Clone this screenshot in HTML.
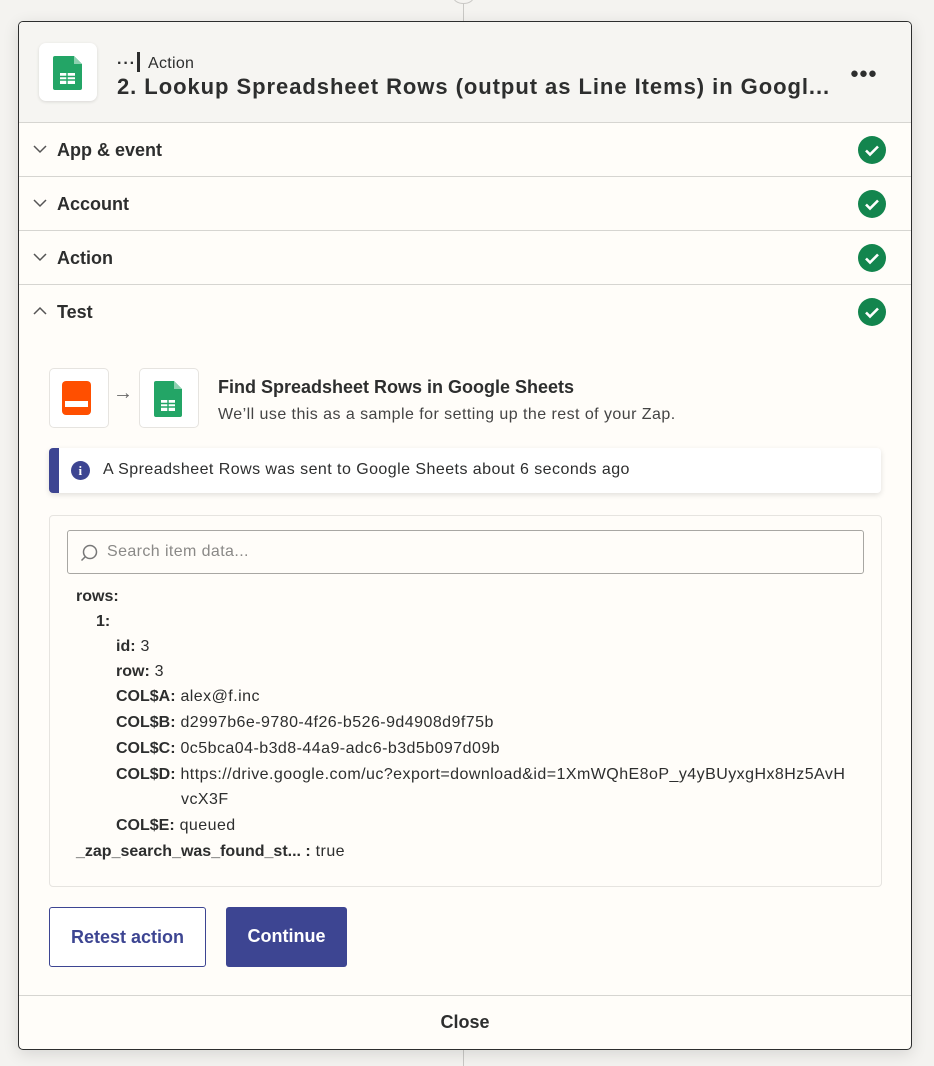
<!DOCTYPE html>
<html><head><meta charset="utf-8"><style>
*{box-sizing:border-box;margin:0;padding:0}
body{width:934px;height:1066px;background:#f4f3f0;font-family:"Liberation Sans",sans-serif;color:#2d2e2e;position:relative;overflow:hidden}
.vline{position:absolute;left:463px;width:1px;background:#c9c8c5}
.card{position:absolute;left:18px;top:21px;width:894px;height:1029px;background:#fffdf9;border:1px solid #2d2e2e;border-radius:5px;box-shadow:0 4px 16px rgba(0,0,0,.12);overflow:hidden}
.head{height:101px;background:#f6f5f2;border-bottom:1px solid #d6d5d1;position:relative}
.appicon{position:absolute;left:20px;top:21px;width:58px;height:58px;background:#fff;border-radius:7px;box-shadow:0 1px 3px rgba(0,0,0,.12)}
.lbl{position:absolute;left:98px;top:30px;font-size:16px;letter-spacing:.3px}
.title{position:absolute;left:98px;top:52px;font-size:22px;font-weight:bold;letter-spacing:0.95px;white-space:nowrap}
.dots{position:absolute;right:34px;top:43px;font-size:15px;font-weight:bold;letter-spacing:0px}
.row{height:54px;border-bottom:1px solid #d6d5d1;position:relative;font-size:18px;font-weight:bold}
.row span{position:absolute;left:38px;top:17px}
.row .chev{position:absolute;left:14px;top:19px}
.check{position:absolute;right:25px;top:13px;width:28px;height:28px;border-radius:50%;background:#13854e}
.test{border-bottom:none}
.ib{position:absolute;width:60px;height:60px;background:#fff;border:1px solid #e6e4e0;border-radius:5px}
.alert{position:absolute;left:30px;top:426px;width:832px;height:45px;background:#fff;border-left:10px solid #3d4592;border-radius:4px;box-shadow:0 2px 6px rgba(0,0,0,.12);font-size:16px;letter-spacing:.45px}
.box{position:absolute;left:30px;top:493px;width:833px;height:372px;border:1px solid #e6e4e0;border-radius:4px}
.search{position:absolute;left:17px;top:14px;width:797px;height:44px;border:1px solid #a8a7a3;border-radius:3px;font-size:16px;color:#8a8987;letter-spacing:.4px}
.d{position:absolute;font-size:16px;white-space:nowrap;letter-spacing:.45px}
.d b{font-weight:bold;letter-spacing:0}
.btn{position:absolute;top:885px;height:60px;font-size:18px;font-weight:bold;border-radius:3px;text-align:center;line-height:58px}
.foot{position:absolute;left:0;bottom:0;width:100%;height:54px;border-top:1px solid #d6d5d1;text-align:center;font-size:18px;font-weight:bold;line-height:52px}
</style></head><body>
<div class="vline" style="top:0;height:21px"></div>
<div style="position:absolute;left:453px;top:-10px;width:21px;height:14px;border:1px solid #c9c8c5;border-radius:50%;background:#f4f3f0"></div>
<div class="vline" style="top:1049px;height:17px"></div>
<div class="card">
 <div class="head">
  <div class="appicon"><svg width="58" height="58" viewBox="0 0 58 58"><path d="M16 13h19l8 8v24a2 2 0 0 1-2 2H16a2 2 0 0 1-2-2V15a2 2 0 0 1 2-2z" fill="#23a566"/><path d="M35 13v8h8z" fill="#8ed1b1"/><rect x="21" y="30" width="15" height="11" fill="#fff"/><path d="M21 33.5h15M21 37h15M28 30v11" stroke="#23a566" stroke-width="1.4"/></svg></div>
  <div class="lbl"><span style="font-weight:bold;letter-spacing:1px">···</span><span style="display:inline-block;width:3px;height:20px;background:#2d2e2e;vertical-align:-4px;margin:0 8px 0 1px"></span>Action</div>
  <div class="title">2. Lookup Spreadsheet Rows (output as Line Items) in Googl...</div>
  <div class="dots">●●●</div>
 </div>
 <div class="row"><svg class="chev" width="14" height="14"><path d="M1 4l6 6 6-6" stroke="#555" stroke-width="1.5" fill="none"/></svg><span>App &amp; event</span><div class="check"><svg width="28" height="28"><path d="M8 14.5l4 4 8-8" stroke="#fff" stroke-width="2.6" fill="none"/></svg></div></div>
 <div class="row"><svg class="chev" width="14" height="14"><path d="M1 4l6 6 6-6" stroke="#555" stroke-width="1.5" fill="none"/></svg><span>Account</span><div class="check"><svg width="28" height="28"><path d="M8 14.5l4 4 8-8" stroke="#fff" stroke-width="2.6" fill="none"/></svg></div></div>
 <div class="row"><svg class="chev" width="14" height="14"><path d="M1 4l6 6 6-6" stroke="#555" stroke-width="1.5" fill="none"/></svg><span>Action</span><div class="check"><svg width="28" height="28"><path d="M8 14.5l4 4 8-8" stroke="#fff" stroke-width="2.6" fill="none"/></svg></div></div>
 <div class="row test"><svg class="chev" width="14" height="14"><path d="M1 10l6-6 6 6" stroke="#555" stroke-width="1.5" fill="none"/></svg><span>Test</span><div class="check"><svg width="28" height="28"><path d="M8 14.5l4 4 8-8" stroke="#fff" stroke-width="2.6" fill="none"/></svg></div></div>

 <div class="ib" style="left:30px;top:346px"><div style="position:absolute;left:12px;top:12px;width:29px;height:34px;background:#ff4f00;border-radius:4px"><div style="position:absolute;left:3px;bottom:8px;width:23px;height:6px;background:#fff"></div></div></div>
 <div style="position:absolute;left:94px;top:360px;font-size:20px;color:#666">→</div>
 <div class="ib" style="left:120px;top:346px"><svg width="58" height="58" viewBox="0 0 58 58"><path d="M16 12h18l8 8v26a2 2 0 0 1-2 2H16a2 2 0 0 1-2-2V14a2 2 0 0 1 2-2z" fill="#23a566"/><path d="M34 12v8h8z" fill="#8ed1b1"/><rect x="21" y="31" width="14" height="11" fill="#fff"/><path d="M21 34.5h14M21 38h14M28 31v11" stroke="#23a566" stroke-width="1.4"/></svg></div>
 <div style="position:absolute;left:199px;top:355px;font-size:18px;font-weight:bold">Find Spreadsheet Rows in Google Sheets</div>
 <div style="position:absolute;left:199px;top:384px;font-size:16px;color:#444;letter-spacing:.45px">We’ll use this as a sample for setting up the rest of your Zap.</div>

 <div class="alert"><div style="position:absolute;left:12px;top:13px;width:19px;height:19px;border-radius:50%;background:#3d4592;color:#fff;font-size:13px;font-weight:bold;text-align:center;line-height:19px;font-family:'Liberation Serif',serif">i</div><div style="position:absolute;left:44px;top:13px">A Spreadsheet Rows was sent to Google Sheets about 6 seconds ago</div></div>

 <div class="box">
  <div class="search"><svg style="position:absolute;left:12px;top:13px" width="18" height="18"><circle cx="10" cy="8" r="6.5" stroke="#777" stroke-width="1.5" fill="none"/><path d="M5.5 12.5L1.5 16.5" stroke="#777" stroke-width="1.5"/></svg><span style="position:absolute;left:39px;top:12px">Search item data...</span></div>
  <div class="d" style="left:26px;top:72px"><b>rows:</b></div>
  <div class="d" style="left:46px;top:97px"><b>1:</b></div>
  <div class="d" style="left:66px;top:122px"><b>id:</b> 3</div>
  <div class="d" style="left:66px;top:147px"><b>row:</b> 3</div>
  <div class="d" style="left:66px;top:172px"><b>COL$A:</b> alex@f.inc</div>
  <div class="d" style="left:66px;top:198px"><b>COL$B:</b> d2997b6e-9780-4f26-b526-9d4908d9f75b</div>
  <div class="d" style="left:66px;top:224px"><b>COL$C:</b> 0c5bca04-b3d8-44a9-adc6-b3d5b097d09b</div>
  <div class="d" style="left:66px;top:250px"><b>COL$D:</b> https://drive.google.com/uc?export=download&amp;id=1XmWQhE8oP_y4yBUyxgHx8Hz5AvH</div>
  <div class="d" style="left:131px;top:275px">vcX3F</div>
  <div class="d" style="left:66px;top:301px"><b>COL$E:</b> queued</div>
  <div class="d" style="left:26px;top:327px"><b>_zap_search_was_found_st... :</b> true</div>
 </div>

 <div class="btn" style="left:30px;width:157px;border:1px solid #3d4592;color:#3d4592;background:#fff">Retest action</div>
 <div class="btn" style="left:207px;width:121px;background:#3d4592;color:#fff">Continue</div>

 <div class="foot">Close</div>
</div>
</body></html>
